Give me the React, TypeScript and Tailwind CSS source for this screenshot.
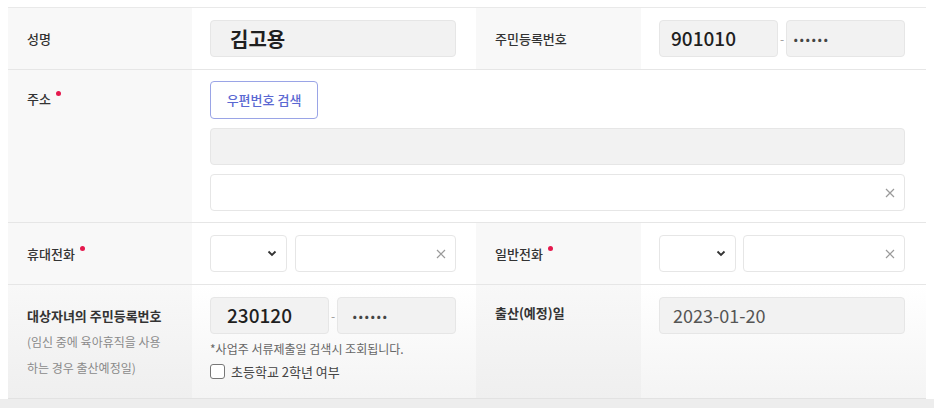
import React from "react";

const Dot = () => (
  <span className="ml-[5px] -mt-[10px] inline-block h-[5px] w-[5px] rounded-full bg-[#e5194d]" />
);

const Clear = () => (
  <svg width="10" height="10" viewBox="0 0 10 10" className="text-[#9a9a9a]">
    <path d="M1 1 L9 9 M9 1 L1 9" stroke="currentColor" strokeWidth="1.2" />
  </svg>
);

const Chevron = () => (
  <svg width="10" height="7" viewBox="0 0 10 7" className="text-[#333]">
    <path d="M1.5 1.5 L5 5 L8.5 1.5" stroke="currentColor" strokeWidth="1.8" fill="none" />
  </svg>
);

const Box = ({
  children,
  gray,
  className = "",
}: {
  children?: React.ReactNode;
  gray?: boolean;
  className?: string;
}) => (
  <div
    className={`flex h-[37px] items-center rounded-[4px] border border-[#e6e6e6] ${
      gray ? "bg-[#f2f2f2]" : "bg-white"
    } ${className}`}
  >
    {children}
  </div>
);

const Select = () => (
  <Box className="w-[77px] justify-end pr-[9px]">
    <Chevron />
  </Box>
);

const ClearInput = ({ className = "" }: { className?: string }) => (
  <Box className={`justify-end pr-[9px] ${className}`}>
    <Clear />
  </Box>
);

const Label = ({ children, className = "" }: { children: React.ReactNode; className?: string }) => (
  <div className={`flex bg-[#f8f8f8] pl-[19px] text-[13px] font-medium text-[#333] ${className}`}>{children}</div>
);

const Masked = ({ className = "" }: { className?: string }) => (
  <Box gray className={`w-[119px] pb-[7px] text-[17px] font-bold tracking-[0.5px] text-[#444] ${className}`}>
    ......
  </Box>
);

export default function App() {
  return (
    <div
      className="h-[408px] w-[934px] overflow-hidden bg-white pt-[7px]"
      style={{ fontFamily: '"Noto Sans CJK KR", "Noto Sans", sans-serif' }}
    >
      <div className="ml-[8px] w-[918px] border-t border-[#e9e9e9]">
        {/* 성명 / 주민등록번호 */}
        <div className="grid h-[62px] grid-cols-[184px_284px_165px_285px] border-b border-[#e6e6e6]">
          <Label className="items-center">성명</Label>
          <div className="flex items-center pl-[18px]">
            <Box gray className="w-[246px] pl-[19px] text-[20px] font-semibold text-[#1f1f1f]">
              김고용
            </Box>
          </div>
          <Label className="items-center">주민등록번호</Label>
          <div className="flex items-center pl-[18px]">
            <Box gray className="w-[119px] pl-[11px] text-[19px] font-medium text-[#1f1f1f]">
              901010
            </Box>
            <span className="w-[8px] text-center text-[12px] text-[#999]">-</span>
            <Masked className="pl-[6px]" />
          </div>
        </div>

        {/* 주소 */}
        <div className="grid h-[153px] grid-cols-[184px_734px] border-b border-[#e6e6e6]">
          <Label className="items-start pt-[19px]">
            <span className="flex items-center">
              주소
              <Dot />
            </span>
          </Label>
          <div className="flex flex-col gap-[9px] pl-[18px] pt-[11px]">
            <div className="flex h-[38px] w-[108px] items-center justify-center rounded-[4px] border border-[#9aa4e6] text-[13px] font-medium text-[#5a68d2]">
              우편번호 검색
            </div>
            <Box gray className="w-[695px]" />
            <ClearInput className="w-[695px]" />
          </div>
        </div>

        {/* 휴대전화 / 일반전화 */}
        <div className="grid h-[62px] grid-cols-[184px_284px_165px_285px] border-b border-[#e6e6e6]">
          <Label className="items-center">
            <span className="flex items-center">
              휴대전화
              <Dot />
            </span>
          </Label>
          <div className="flex items-center gap-[8px] pl-[18px]">
            <Select />
            <ClearInput className="w-[161px]" />
          </div>
          <Label className="items-center">
            <span className="flex items-center">
              일반전화
              <Dot />
            </span>
          </Label>
          <div className="flex items-center gap-[7px] pl-[18px]">
            <Select />
            <ClearInput className="w-[162px]" />
          </div>
        </div>

        {/* 대상자녀 */}
        <div className="grid h-[114px] grid-cols-[184px_284px_165px_285px] border-b border-[#e2e2e2] bg-gradient-to-b from-white to-[#f4f4f4]">
          <div className="flex flex-col bg-gradient-to-b from-[#f8f8f8] to-[#efefef] pl-[19px] pt-[18px] text-[12px] leading-[26px] text-[#8a8a8a]">
            <span className="text-[13px] font-semibold text-[#333]">대상자녀의 주민등록번호</span>
            <span>(임신 중에 육아휴직을 사용</span>
            <span>하는 경우 출산예정일)</span>
          </div>
          <div className="flex flex-col pl-[18px] pt-[12px]">
            <div className="flex items-center">
              <Box gray className="w-[119px] pl-[16px] text-[19px] font-medium text-[#1f1f1f]">
                230120
              </Box>
              <span className="w-[8px] text-center text-[12px] text-[#999]">-</span>
              <Masked className="pl-[14px]" />
            </div>
            <div className="mt-[5px] text-[12px] leading-[20px] text-[#666]">*사업주 서류제출일 검색시 조회됩니다.</div>
            <label className="mt-[3px] flex items-center gap-[6px] text-[13px] text-[#444]">
              <span className="h-[15px] w-[15px] rounded-[3px] border border-[#777] bg-white" />
              초등학교 2학년 여부
            </label>
          </div>
          <div className="flex bg-gradient-to-b from-[#f8f8f8] to-[#efefef] pl-[19px] pt-[18px] text-[13px] font-semibold text-[#333]">
            출산(예정)일
          </div>
          <div className="flex pl-[18px] pt-[12px]">
            <Box gray className="w-[246px] pl-[13px] text-[18px] text-[#555]">
              2023-01-20
            </Box>
          </div>
        </div>
      </div>
      <div className="h-[20px] bg-[#ededed]" />
    </div>
  );
}
